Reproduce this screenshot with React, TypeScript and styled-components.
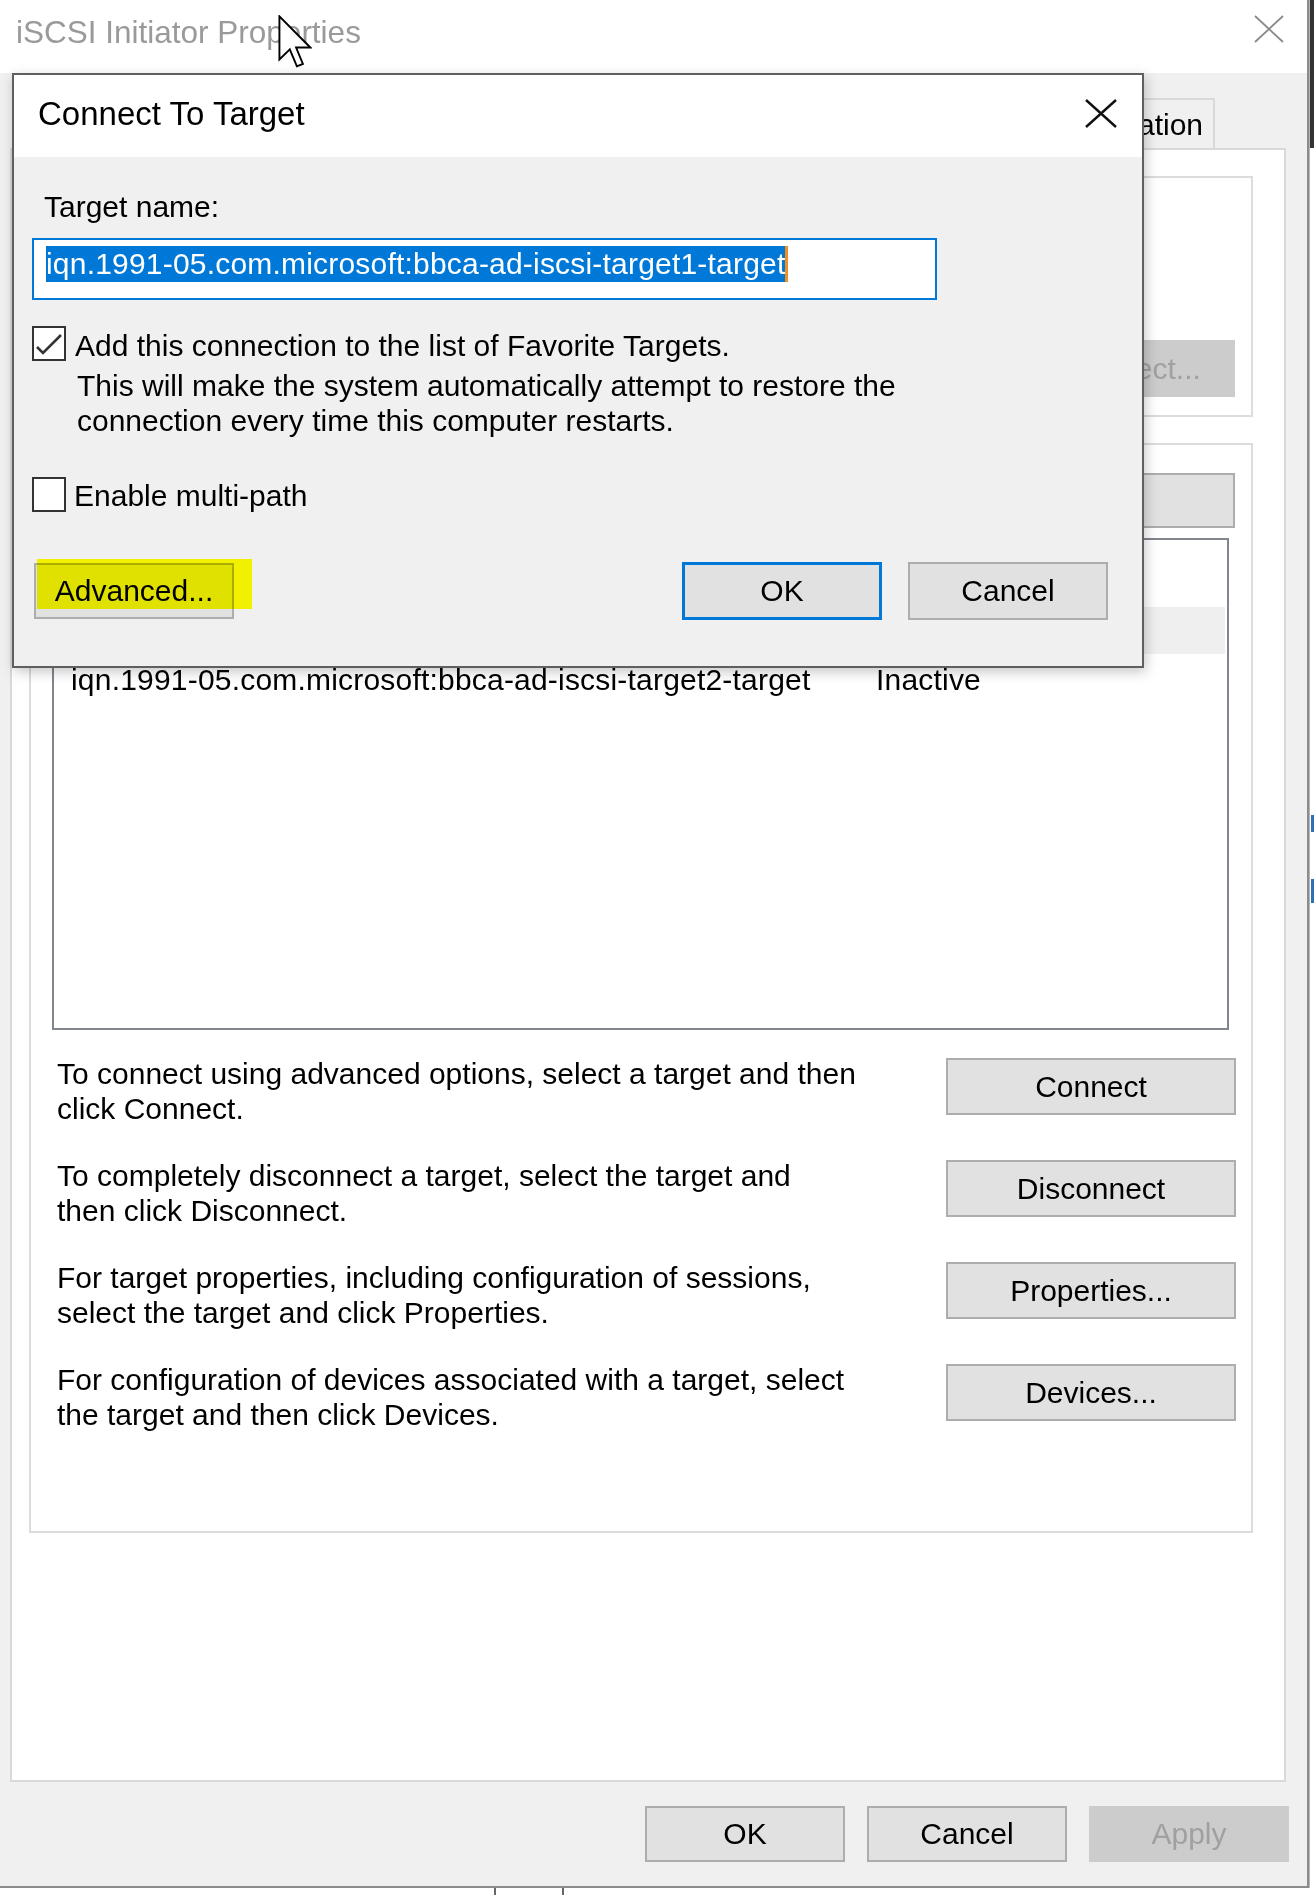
import React from 'react';
import styled, { createGlobalStyle } from 'styled-components';

const GlobalStyle = createGlobalStyle`
	html, body {
		margin: 0;
		padding: 0;
		background: #fff;
	}
	body {
		font-family: "Liberation Sans", Arial, sans-serif;
		font-size: 30px;
		color: #000;
	}
	* {
		box-sizing: border-box;
	}
`;

const Screen = styled.div`
	position: relative;
	width: 1314px;
	height: 1895px;
	overflow: hidden;
	display: flex;
	flex-direction: column;
	background: #fff;
`;

const Desk = styled.div`
	display: flex;
`;

const Window = styled.div`
	width: 1309px;
	display: flex;
	flex-direction: column;
	background: #f0f0f0;
	border-right: 2px solid #8c8c8c;
	border-bottom: 2px solid #8c8c8c;
`;

const TitleBar = styled.div`
	height: 73px;
	flex-shrink: 0;
	background: #fff;
	display: flex;
	align-items: flex-start;
	justify-content: space-between;
	padding: 12px 23px 0 16px;
`;

const WindowTitle = styled.div`
	font-size: 31.5px;
	line-height: 40px;
	color: #9a9a9a;
`;

const CloseGlyph = styled.svg<{ $offset: number }>`
	display: block;
	margin-top: ${({ $offset }) => $offset}px;
	flex-shrink: 0;
`;

const WindowBody = styled.div`
	display: flex;
	flex-direction: column;
	padding: 25px 21px 24px 10px;
`;

const TabStrip = styled.div`
	display: flex;
	align-items: flex-end;
	justify-content: flex-end;
	height: 50px;
	padding-right: 71px;
	white-space: nowrap;
`;

const Tab = styled.div`
	height: 50px;
	padding: 3px 10px 0;
	line-height: 44px;
	background: #f0f0f0;
	border: 2px solid #d9d9d9;
	border-bottom: none;
`;

const TabPanel = styled.div`
	height: 1634px;
	background: #fff;
	border: 2px solid #d9d9d9;
	padding: 26px 31px 0 17px;
	display: flex;
	flex-direction: column;
`;

const GroupBox = styled.section<{ $padTop: number; $padBottom: number }>`
	border: 2px solid #dcdcdc;
	display: flex;
	flex-direction: column;
	padding: ${({ $padTop, $padBottom }) => `${$padTop}px 16px ${$padBottom}px 0`};
	& + & {
		margin-top: 26px;
	}
`;

const ButtonRow = styled.div`
	display: flex;
	justify-content: flex-end;
`;

const Button = styled.button<{ $w?: number; $h?: number; $primary?: boolean }>`
	width: ${({ $w }) => $w ?? 290}px;
	height: ${({ $h }) => $h ?? 57}px;
	flex-shrink: 0;
	padding: 0;
	font-family: inherit;
	font-size: 30px;
	color: #000;
	white-space: nowrap;
	background: #e1e1e1;
	border: ${({ $primary }) => ($primary ? '3px solid #0078d7' : '2px solid #adadad')};
	&:disabled {
		background: #ccc;
		border-color: #ccc;
		color: #a0a0a0;
	}
`;

const ListView = styled.div`
	height: 492px;
	margin: 10px 6px 0 21px;
	padding-top: 67px;
	background: #fff;
	border: 2px solid #80858e;
	overflow: hidden;
`;

const ListRow = styled.div<{ $selected?: boolean }>`
	display: flex;
	width: 1171px;
	height: 47px;
	padding-top: 4px;
	line-height: 44px;
	white-space: nowrap;
	background: ${({ $selected }) => ($selected ? '#efefef' : 'transparent')};
`;

const Cell = styled.div<{ $w?: number }>`
	width: ${({ $w }) => ($w ? `${$w}px` : 'auto')};
	flex-shrink: 0;
	padding-left: 17px;
	letter-spacing: 0.2px;
`;

const Actions = styled.div`
	display: flex;
	flex-direction: column;
	gap: 32px;
	margin-top: 26px;
`;

const ActionRow = styled.div`
	display: flex;
	align-items: flex-start;
	justify-content: space-between;
	height: 70px;
	padding-left: 26px;
	& > button {
		margin: 2px -1px 0 0;
	}
`;

const ActionText = styled.p`
	margin: 0;
	line-height: 35px;
	white-space: nowrap;
`;

const FooterButtons = styled.div`
	display: flex;
	justify-content: flex-end;
	gap: 22px;
	margin: 24px -3px 0 0;
`;

const EdgeStrip = styled.div`
	width: 5px;
	display: flex;
	flex-direction: column;
	border-left: 1px solid #b5b5b5;
`;

const EdgeDark = styled.div`
	height: 148px;
	background: #333;
`;

const EdgeTick = styled.div<{ $gap: number; $h: number }>`
	width: 3px;
	height: ${({ $h }) => $h}px;
	margin: ${({ $gap }) => $gap}px 0 0 1px;
	background: #2f6fb3;
`;

const BottomStrip = styled.div`
	display: flex;
	height: 7px;
`;

const BottomTick = styled.div<{ $gap: number }>`
	width: 2px;
	margin-left: ${({ $gap }) => $gap}px;
	background: #666;
`;

const Cursor = styled.svg`
	position: absolute;
	left: 278px;
	top: 15px;
`;

/* dialog on top */

const Dialog = styled.div`
	position: absolute;
	left: 12px;
	top: 73px;
	width: 1132px;
	display: flex;
	flex-direction: column;
	background: #f0f0f0;
	border: 2px solid #5f5f5f;
	box-shadow: 2px 4px 12px rgba(0, 0, 0, 0.22);
`;

const DialogTitleBar = styled.div`
	height: 82px;
	background: #fff;
	display: flex;
	align-items: flex-start;
	justify-content: space-between;
	padding: 19px 25px 0 24px;
`;

const DialogTitle = styled.div`
	font-size: 33px;
	line-height: 40px;
`;

const DialogBody = styled.div`
	display: flex;
	flex-direction: column;
	padding: 0 34px 46px 0;
`;

const FieldLabel = styled.div`
	margin: 32px 0 0 30px;
	line-height: 35px;
`;

const TargetInput = styled.div`
	width: 905px;
	height: 62px;
	margin: 14px 0 0 18px;
	padding: 6px 0 0 12px;
	display: flex;
	align-items: flex-start;
	background: #fff;
	border: 2px solid #0078d7;
`;

const Selection = styled.span`
	line-height: 36px;
	letter-spacing: 0.2px;
	color: #fff;
	background: #0078d7;
	border-right: 3px solid #f0901e;
	white-space: nowrap;
`;

const CheckRow = styled.div<{ $gap: number }>`
	display: flex;
	align-items: flex-start;
	margin: ${({ $gap }) => $gap}px 0 0 18px;
`;

const CheckBox = styled.div`
	width: 34px;
	height: 35px;
	flex-shrink: 0;
	background: #fff;
	border: 2px solid #333;
`;

const CheckText = styled.div<{ $nudge: number; $indent: number }>`
	margin-left: ${({ $indent }) => $indent}px;
	padding-top: ${({ $nudge }) => $nudge}px;
	line-height: 35px;
	white-space: nowrap;
`;

const CheckHint = styled.p`
	margin: 5px 0 0 2px;
	line-height: 35px;
`;

const DialogButtons = styled.div`
	display: flex;
	align-items: flex-start;
	gap: 26px;
	margin-top: 49px;
	padding-left: 20px;
`;

const AdvancedWrap = styled.div`
	position: relative;
	margin: 1px auto 0 0;
`;

const Highlight = styled.div`
	position: absolute;
	left: 3px;
	top: -4px;
	width: 215px;
	height: 50px;
	background: #ffff00;
	mix-blend-mode: multiply;
	pointer-events: none;
`;

const CloseX: React.FC<{ w: number; h: number; color: string; stroke: number; offset: number }> = ({
	w,
	h,
	color,
	stroke,
	offset,
}) => (
	<CloseGlyph $offset={offset} width={w} height={h} viewBox={`0 0 ${w} ${h}`}>
		<path d={`M1 1 L${w - 1} ${h - 1} M${w - 1} 1 L1 ${h - 1}`} stroke={color} strokeWidth={stroke} fill="none" />
	</CloseGlyph>
);

const actions = [
	{ lines: ['To connect using advanced options, select a target and then', 'click Connect.'], label: 'Connect' },
	{ lines: ['To completely disconnect a target, select the target and', 'then click Disconnect.'], label: 'Disconnect' },
	{
		lines: ['For target properties, including configuration of sessions,', 'select the target and click Properties.'],
		label: 'Properties...',
	},
	{
		lines: ['For configuration of devices associated with a target, select', 'the target and then click Devices.'],
		label: 'Devices...',
	},
];

const App: React.FC = () => {
	return (
		<Screen>
			<GlobalStyle />
			<Desk>
				<Window>
					<TitleBar>
						<WindowTitle>iSCSI Initiator Properties</WindowTitle>
						<CloseX w={30} h={28} color="#8a8a8a" stroke={1.8} offset={3} />
					</TitleBar>
					<WindowBody>
						<TabStrip>
							<Tab>Configuration</Tab>
						</TabStrip>
						<TabPanel>
							{/* Quick Connect group, mostly under the dialog */}
							<GroupBox $padTop={162} $padBottom={18}>
								<ButtonRow>
									<Button disabled>Quick Connect...</Button>
								</ButtonRow>
							</GroupBox>
							{/* Discovered targets group */}
							<GroupBox $padTop={28} $padBottom={99}>
								<ButtonRow>
									<Button $h={55}>Refresh</Button>
								</ButtonRow>
								<ListView>
									<ListRow $selected />
									<ListRow>
										<Cell $w={805}>iqn.1991-05.com.microsoft:bbca-ad-iscsi-target2-target</Cell>
										<Cell>Inactive</Cell>
									</ListRow>
								</ListView>
								<Actions>
									{actions.map((a) => (
										<ActionRow key={a.label}>
											<ActionText>
												{a.lines[0]}
												<br />
												{a.lines[1]}
											</ActionText>
											<Button>{a.label}</Button>
										</ActionRow>
									))}
								</Actions>
							</GroupBox>
						</TabPanel>
						<FooterButtons>
							<Button $w={200} $h={56}>
								OK
							</Button>
							<Button $w={200} $h={56}>
								Cancel
							</Button>
							<Button $w={200} $h={56} disabled>
								Apply
							</Button>
						</FooterButtons>
					</WindowBody>
				</Window>
				<EdgeStrip>
					<EdgeDark />
					<EdgeTick $gap={667} $h={17} />
					<EdgeTick $gap={47} $h={24} />
				</EdgeStrip>
			</Desk>
			<BottomStrip>
				<BottomTick $gap={494} />
				<BottomTick $gap={66} />
			</BottomStrip>

			<Dialog>
				<DialogTitleBar>
					<DialogTitle>Connect To Target</DialogTitle>
					<CloseX w={32} h={29} color="#111" stroke={2.4} offset={5} />
				</DialogTitleBar>
				<DialogBody>
					<FieldLabel>Target name:</FieldLabel>
					<TargetInput>
						<Selection>iqn.1991-05.com.microsoft:bbca-ad-iscsi-target1-target</Selection>
					</TargetInput>
					<CheckRow $gap={26}>
						<CheckBox>
							<svg width="30" height="31" viewBox="0 0 30 31">
								<path d="M3 19 L9 25 L27 7" stroke="#333" strokeWidth="2.6" fill="none" />
							</svg>
						</CheckBox>
						<CheckText $nudge={2} $indent={9}>
							Add this connection to the list of Favorite Targets.
							<CheckHint>
								This will make the system automatically attempt to restore the
								<br />
								connection every time this computer restarts.
							</CheckHint>
						</CheckText>
					</CheckRow>
					<CheckRow $gap={39}>
						<CheckBox />
						<CheckText $nudge={1} $indent={8}>
							Enable multi-path
						</CheckText>
					</CheckRow>
					<DialogButtons>
						<AdvancedWrap>
							<Button $w={200} $h={56}>
								Advanced...
							</Button>
							<Highlight />
						</AdvancedWrap>
						<Button $w={200} $h={58} $primary>
							OK
						</Button>
						<Button $w={200} $h={58}>
							Cancel
						</Button>
					</DialogButtons>
				</DialogBody>
			</Dialog>

			<Cursor width="34" height="53" viewBox="0 0 12.4 19.4">
				<path
					d="M0.5 0.5 L0.5 16.3 L4.3 12.6 L6.9 18.8 L9.1 17.9 L6.6 11.9 L11.8 11.9 Z"
					fill="#fff"
					stroke="#000"
					strokeWidth="0.7"
					strokeLinejoin="miter"
				/>
			</Cursor>
		</Screen>
	);
};

export default App;
